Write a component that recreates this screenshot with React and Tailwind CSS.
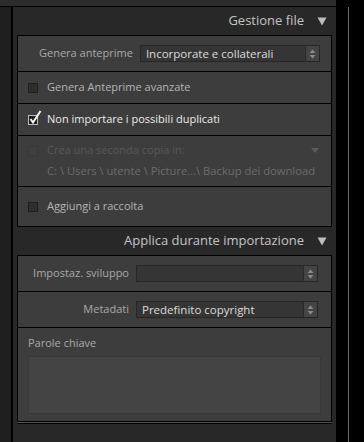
import React from "react";

const font = { fontFamily: '"Open Sans", "Noto Sans", sans-serif' };

function Arrows() {
  return (
    <div className="flex h-full w-[14px] items-center justify-center border-l border-[#2a2a2a] bg-[#444]">
      <svg width="7" height="10" viewBox="0 0 7 10">
        <path d="M3.5 0.5 L6.5 4 L0.5 4 Z" fill="#8a8a8a" />
        <path d="M3.5 9.5 L6.5 6 L0.5 6 Z" fill="#8a8a8a" />
      </svg>
    </div>
  );
}

function Select({ value, w }) {
  return (
    <div className={`flex h-[17px] ${w} items-center border border-[#262626] bg-[#353535]`}>
      <div className="flex-1 overflow-hidden whitespace-nowrap pl-[5px] text-[11.5px] leading-[15px] text-[#dcdcdc]">
        {value}
      </div>
      <Arrows />
    </div>
  );
}

function Check({ checked, dim }) {
  return (
    <div
      className={`relative h-[10px] w-[10px] border ${
        checked
          ? "border-[#bdbdbd] bg-[#1c1c1c]"
          : dim
          ? "border-[#383838] bg-[#3f3f3f]"
          : "border-[#1e1e1e] bg-[#2e2e2e]"
      }`}
    >
      {checked && (
        <svg className="absolute -top-[6px] left-[0px]" width="13" height="15" viewBox="0 0 13 15">
          <path d="M1.5 9 L4 12.5 L11.5 1" stroke="#f4f4f4" strokeWidth="2" fill="none" />
        </svg>
      )}
    </div>
  );
}

function Header({ title }) {
  return (
    <div className="flex w-full items-center justify-end pr-[5px]">
      <span className="text-[13px] text-[#c4c4c4]">{title}</span>
      <svg className="ml-[13px]" width="10" height="9" viewBox="0 0 10 9">
        <path d="M0.5 0.5 L9.5 0.5 L5 8.5 Z" fill="#bdbdbd" />
      </svg>
    </div>
  );
}

export default function App() {
  return (
    <div className="flex h-[442px] w-[364px] flex-col bg-black" style={font}>
      <div className="flex h-[7px] w-[364px] shrink-0">
        <div className="h-[7px] w-[336px] border-b border-black bg-[#2c2c2c]" />
      </div>
      <div className="flex flex-1">
        <div className="w-[11px] bg-[#1f1f1f]" />
        <div className="w-[2px] bg-black" />
        <div className="flex w-[323px] flex-col bg-[#282828] pl-[4px] pr-[4px]">
          <div className="flex h-[28px] items-center">
            <Header title="Gestione file" />
          </div>
          <div className="flex flex-col border border-black bg-[#3d3d3d]">
            <div className="flex h-[36px] items-center border-b border-black pl-[21px]">
              <span className="mr-[7px] text-[11px] text-[#a9a9a9]">Genera anteprime</span>
              <Select value="Incorporate e collaterali" w="w-[180px]" />
            </div>
            <div className="flex h-[32px] items-center gap-[9px] border-b border-black pl-[10px]">
              <Check />
              <span className="text-[11px] text-[#b4b4b4]">Genera Anteprime avanzate</span>
            </div>
            <div className="flex h-[32px] items-center gap-[9px] border-b border-black pl-[10px]">
              <Check checked />
              <span className="text-[11px] text-[#ececec]">Non importare i possibili duplicati</span>
            </div>
            <div className="flex h-[51px] flex-col justify-center border-b border-black pl-[10px] pr-[12px]">
              <div className="flex items-center gap-[9px]">
                <Check dim />
                <span className="flex-1 text-[11px] text-[#585858]">Crea una seconda copia in:</span>
                <svg width="8" height="5" viewBox="0 0 8 5">
                  <path d="M0 0 L8 0 L4 5 Z" fill="#5a5a5a" />
                </svg>
              </div>
              <div className="mt-[4px] whitespace-nowrap pl-[19px] text-[11.2px] text-[#6c6c6c]">
                C: \ Users \ utente \ Picture...\ Backup dei download
              </div>
            </div>
            <div className="flex h-[39px] items-center gap-[9px] pl-[10px]">
              <Check />
              <span className="text-[11px] text-[#b4b4b4]">Aggiungi a raccolta</span>
            </div>
          </div>
          <div className="flex h-[28px] items-center">
            <Header title="Applica durante importazione" />
          </div>
          <div className="flex flex-col border border-black bg-[#3d3d3d] shadow-[0_1px_0_#555,0_2px_0_#000]">
            <div className="flex h-[36px] items-center border-b border-black">
              <span className="w-[118px] pr-[7px] text-right text-[11px] text-[#a9a9a9]">Impostaz. sviluppo</span>
              <Select value="" w="w-[182px]" />
            </div>
            <div className="flex h-[36px] items-center border-b border-black">
              <span className="w-[118px] pr-[7px] text-right text-[11px] text-[#a9a9a9]">Metadati</span>
              <Select value="Predefinito copyright" w="w-[182px]" />
            </div>
            <div className="flex h-[93px] flex-col pl-[10px] pr-[10px] pt-[7px]">
              <span className="text-[11px] leading-[16px] text-[#a9a9a9]">Parole chiave</span>
              <div className="mt-[5px] h-[58px] border border-[#383838] bg-[#444444]" />
            </div>
          </div>
        </div>
        <div className="w-[12px] bg-black" />
        <div className="w-[1px] bg-[#6a6a6a]" />
        <div className="flex-1 bg-black" />
      </div>
    </div>
  );
}
